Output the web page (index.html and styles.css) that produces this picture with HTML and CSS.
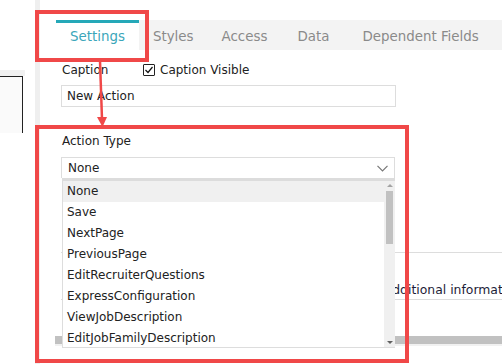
FILE: index.html
```html
<!DOCTYPE html>
<html lang="en">
<head>
    <meta charset="UTF-8">
    <title>Action Properties</title>
    <link rel="stylesheet" href="styles.css">
</head>
<body>
    <div class="sidebar">
        <div class="side-band"></div>
        <div class="side-box"></div>
    </div>
    <div class="divider"></div>

    <div class="panel">
        <div class="tabs">
            <div class="tab active">Settings</div>
            <div class="tab">Styles</div>
            <div class="tab">Access</div>
            <div class="tab tab-data">Data</div>
            <div class="tab tab-dep">Dependent Fields</div>
        </div>

        <div class="form">
            <div class="field-row">
                <span class="label caption-label">Caption</span>
                <span class="checkbox">
                    <svg width="8" height="8" viewBox="0 0 8 8"><polyline points="0.5,4 3,6.5 7.5,1" fill="none" stroke="#111" stroke-width="1.2"/></svg>
                </span>
                <span class="label">Caption Visible</span>
            </div>
            <div class="text-input">New Action</div>

            <div class="field-row action-row">
                <span class="label">Action Type</span>
            </div>
            <div class="select-wrap">
                <div class="select">
                    <span>None</span>
                    <svg class="chevron" width="11" height="7" viewBox="0 0 11 7"><polyline points="0.5,0.8 5.5,5.8 10.5,0.8" fill="none" stroke="#777" stroke-width="1.2"/></svg>
                </div>
                <div class="dropdown">
                    <ul class="options">
                        <li class="selected">None</li>
                        <li>Save</li>
                        <li>NextPage</li>
                        <li>PreviousPage</li>
                        <li>EditRecruiterQuestions</li>
                        <li>ExpressConfiguration</li>
                        <li>ViewJobDescription</li>
                        <li>EditJobFamilyDescription</li>
                    </ul>
                    <div class="vscroll">
                        <span class="arrow-up"></span>
                        <span class="thumb"></span>
                        <span class="arrow-down"></span>
                    </div>
                </div>
            </div>

            <div class="grid">
                <div class="grid-row">
                    <div class="grid-cell first"></div>
                    <div class="grid-cell">Additional information</div>
                </div>
            </div>
            <div class="hscroll"><div class="hthumb"></div></div>
        </div>
    </div>

    <!-- annotation overlay -->
    <div class="mark mark-tab"></div>
    <div class="mark mark-select"></div>
    <svg class="mark-arrow" width="20" height="70" viewBox="0 0 20 70">
        <line x1="6" y1="0" x2="8" y2="58" stroke="#f04848" stroke-width="2.5"/>
        <polygon points="3,56 13,56 8.5,66" fill="#f04848"/>
    </svg>
</body>
</html>
```

FILE: styles.css
```css
* {
    box-sizing: border-box;
    margin: 0;
    padding: 0;
}

body {
    width: 502px;
    height: 364px;
    overflow: hidden;
    display: flex;
    font-family: "DejaVu Sans", Verdana, sans-serif;
    font-size: 12px;
    color: #222;
    background: #fff;
}

.sidebar {
    width: 35px;
    flex-shrink: 0;
    padding-top: 70px;
}

.side-band {
    width: 25px;
    height: 6px;
    background: #f1f1f1;
}

.side-box {
    width: 23px;
    height: 57px;
    border-top: 1px solid #222;
    border-right: 1px solid #222;
    background: #fafafa;
}

.divider {
    width: 5px;
    flex-shrink: 0;
    background: #efefef;
}

.panel {
    flex: 1;
    min-width: 0;
    padding-top: 20px;
}

.tabs {
    display: flex;
    height: 30px;
    margin-left: 16px;
    background: #f3f3f3;
}

.tab {
    padding: 3px 14px 0;
    font-size: 13.4px;
    line-height: 27px;
    color: #8a8a8a;
    white-space: nowrap;
}

.tab.active {
    padding-top: 0;
    background: #fff;
    border-top: 3px solid #25a8b8;
    color: #3ba6ba;
}

.tab-data {
    padding-left: 16px;
    padding-right: 16px;
}

.tab-dep {
    padding-left: 17px;
}

.form {
    padding-left: 21px;
}

.field-row {
    display: flex;
    align-items: center;
    height: 20px;
    margin-top: 10px;
}

.label {
    padding-left: 1px;
    white-space: nowrap;
}

.caption-label {
    width: 82px;
}

.checkbox {
    display: flex;
    align-items: center;
    justify-content: center;
    width: 12px;
    height: 12px;
    margin-right: 4px;
    border: 1px solid #222;
    border-radius: 1px;
}

.text-input {
    width: 335px;
    height: 22px;
    margin-top: 5px;
    padding-left: 5px;
    border: 1px solid #ddd;
    line-height: 20px;
}

.action-row {
    margin-top: 24px;
}

.select-wrap {
    position: relative;
    width: 334px;
    margin-top: 6px;
}

.select {
    display: flex;
    align-items: center;
    justify-content: space-between;
    height: 21px;
    padding: 0 6px 0 6px;
    border: 1px solid #ddd;
    border-bottom: none;
}

.dropdown {
    position: absolute;
    top: 21px;
    left: 1px;
    right: 0;
    z-index: 2;
    display: flex;
    height: 170px;
    background: #fff;
    border-top: 3px solid #dcdcdc;
    border-left: 1px solid #ddd;
    border-bottom: 1px solid #ddd;
}

.options {
    flex: 1;
    list-style: none;
    overflow: hidden;
}

.options li {
    height: 21px;
    padding-left: 4px;
    line-height: 21px;
    white-space: nowrap;
}

.options li.selected {
    background: #f0f0f0;
}

.vscroll {
    display: flex;
    flex-direction: column;
    align-items: center;
    width: 11px;
    background: #f0f0f0;
}

.thumb {
    width: 7px;
    height: 53px;
    margin-top: 4px;
    background: #c1c1c1;
}

.arrow-up,
.arrow-down {
    width: 0;
    height: 0;
    border-left: 3px solid transparent;
    border-right: 3px solid transparent;
}

.arrow-up {
    margin-top: 3px;
    border-bottom: 3px solid #a3a3a3;
}

.arrow-down {
    margin-top: auto;
    margin-bottom: 3px;
    border-top: 3px solid #606060;
}

.grid {
    margin-top: 74px;
    border-top: 1px solid #ddd;
    border-bottom: 1px solid #ddd;
    width: 470px;
}

.grid-row {
    display: flex;
    padding: 29px 0 1px;
}

.grid-cell {
    line-height: 16px;
    font-size: 12.4px;
    color: #1d1d38;
    white-space: nowrap;
}

.grid-cell.first {
    width: 323px;
    flex-shrink: 0;
}

.hscroll {
    width: 470px;
    height: 10px;
    margin-top: 36px;
    margin-left: -6px;
    background: #f1f1f1;
}

.hthumb {
    height: 8px;
    background: #c1c1c1;
}

.mark {
    position: absolute;
    border: 4px solid #f04848;
    z-index: 5;
}

.mark-tab {
    left: 35px;
    top: 10px;
    width: 114px;
    height: 52px;
}

.mark-select {
    left: 35px;
    top: 125px;
    width: 374px;
    height: 238px;
}

.mark-arrow {
    position: absolute;
    left: 94px;
    top: 61px;
    z-index: 6;
}
```
